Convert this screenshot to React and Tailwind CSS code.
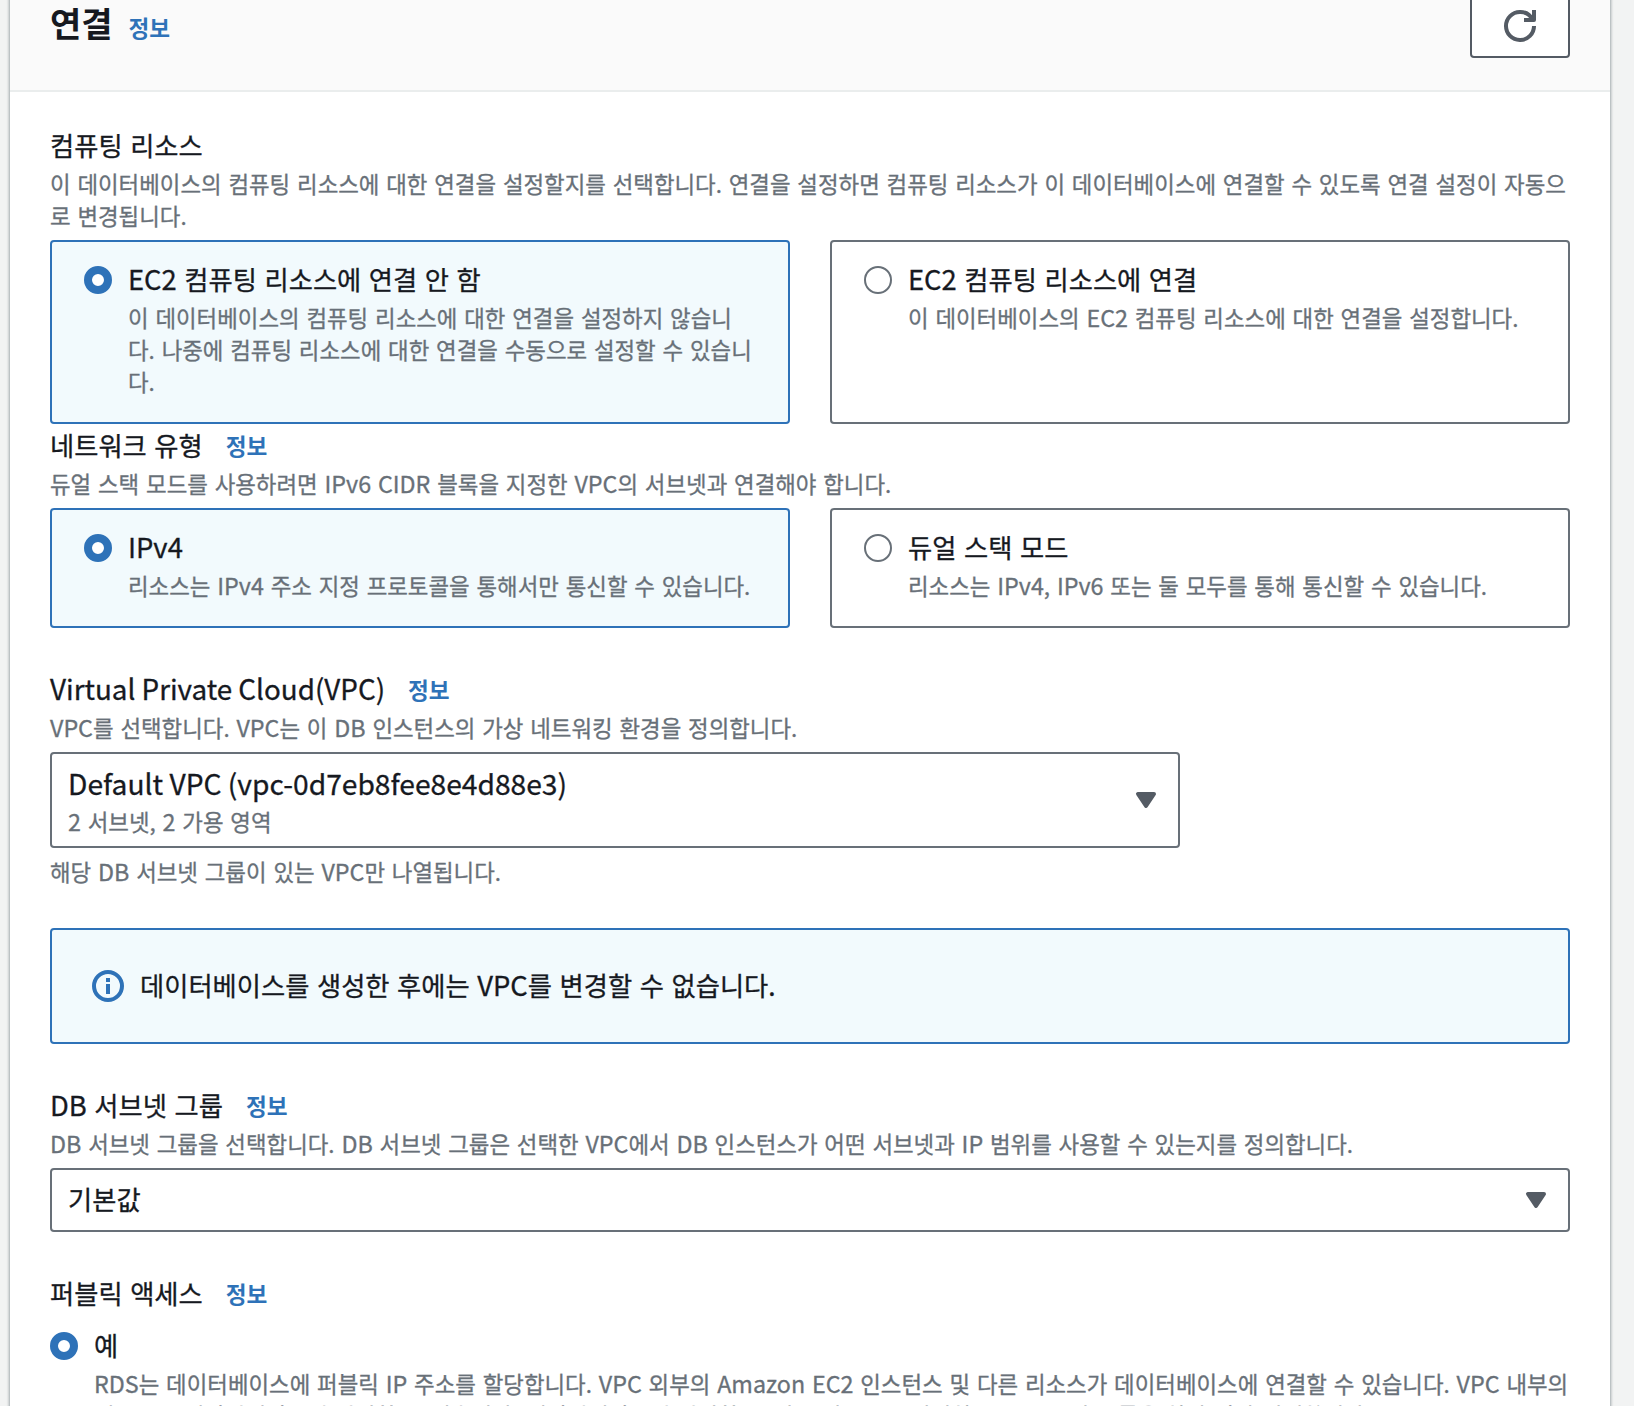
import { Children } from "react";
import clsx from "clsx";

// latin words are set a touch larger than the hangul around them
function mixed(children) {
  return Children.toArray(children).map((child) => {
    if (typeof child !== "string") return child;
    return child.split(/([A-Za-z0-9]+)/).map((part, i) => (
      i % 2 ? <span key={ i } className="text-[1.04em] leading-none">{ part }</span> : part
    ));
  });
}

function InfoLink({ className }) {
  return (
    <a href="#" className={ clsx("text-[22.6px] font-bold text-[#2e72b8]", className) }>정보</a>
  );
}

function Label({ info, className, children }) {
  return (
    <div className="flex h-11 items-center whitespace-nowrap">
      <span className={ clsx("pb-0.5 text-[#16191f] [-webkit-text-stroke:0.3px]", className || "text-[26.3px] [word-spacing:1.7px]") }>
        { className ? children : mixed(children) }
      </span>
      { info && <InfoLink className="ml-[23px]" /> }
    </div>
  );
}

function Hint({ children }) {
  return (
    <p className="-mt-px pb-px text-[22.4px] leading-8 whitespace-nowrap text-[#687078] [word-spacing:1.8px] [-webkit-text-stroke:0.3px]">
      { mixed(children) }
    </p>
  );
}

function Radio({ checked }) {
  return (
    <span
      className={ clsx(
        "mt-2 block size-7 shrink-0 rounded-full bg-white",
        checked ? "border-8 border-[#2e72b8]" : "border-2 border-[#687078]"
      ) }
    />
  );
}

function Tile({ checked, title, titleClass, children }) {
  return (
    <div
      className={ clsx(
        "flex gap-4 rounded-[4px] border-2 px-8 pt-4 pb-6",
        checked ? "border-[#2e72b8] bg-[#f2fafd]" : "border-[#687078] bg-white"
      ) }
    >
      <Radio checked={ checked } />
      <div>
        <Label className={ titleClass }>{ title }</Label>
        { children }
      </div>
    </div>
  );
}

function Caret() {
  return (
    <svg viewBox="0 0 16 16" className="size-8 shrink-0">
      <path d="M4 5h8l-4 6z" fill="#545b64" stroke="#545b64" strokeWidth="2" strokeLinejoin="round" />
    </svg>
  );
}

function RefreshIcon() {
  return (
    <svg viewBox="0 0 16 16" className="size-8" fill="none" stroke="#545b64" strokeWidth="2">
      <path d="M10 5h5V0" strokeLinejoin="round" />
      <path d="M15 8a6.957 6.957 0 0 1-7 7 6.957 6.957 0 0 1-7-7 6.957 6.957 0 0 1 7-7 6.87 6.87 0 0 1 6.3 4" />
    </svg>
  );
}

function InfoIcon() {
  return (
    <svg viewBox="0 0 16 16" className="size-8 shrink-0" fill="none" stroke="#2e72b8" strokeWidth="2">
      <circle cx="8" cy="8" r="7" />
      <path d="M8 12V7M8 6V4" />
    </svg>
  );
}

export default function App() {
  return (
    <div className="h-[1406px] overflow-hidden bg-[#f2f3f3] pr-6 pl-2.5 font-['Noto_Sans_CJK_KR',sans-serif]">
      <section className="-mt-2 h-[1500px] bg-white pt-2 shadow-[0_2px_2px_0_rgba(0,28,36,0.3),2px_2px_2px_0_rgba(0,28,36,0.15),-2px_2px_2px_0_rgba(0,28,36,0.15)]">
        <header className="flex h-[92px] justify-between border-b-2 border-[#eaeded] bg-[#fafafa] px-10">
          <div className="flex items-baseline whitespace-nowrap">
            <h2 className="text-[34px] leading-[46px] font-bold text-[#16191f]">연결</h2>
            <InfoLink className="ml-4" />
          </div>
          <button className="-mt-1.5 flex h-16 w-25 items-center justify-center rounded-[4px] border-2 border-[#545b64] bg-white">
            <RefreshIcon />
          </button>
        </header>

        <div className="px-10 pt-8">
          <Label>컴퓨팅 리소스</Label>
          <Hint>
            이 데이터베이스의 컴퓨팅 리소스에 대한 연결을 설정할지를 선택합니다. 연결을 설정하면 컴퓨팅 리소스가 이 데이터베이스에 연결할 수 있도록 연결 설정이 자동으
            <br />
            로 변경됩니다.
          </Hint>
          <div className="mt-2 grid grid-cols-2 gap-10">
            <Tile checked title="EC2 컴퓨팅 리소스에 연결 안 함">
              <Hint>
                이 데이터베이스의 컴퓨팅 리소스에 대한 연결을 설정하지 않습니
                <br />
                다. 나중에 컴퓨팅 리소스에 대한 연결을 수동으로 설정할 수 있습니
                <br />
                다.
              </Hint>
            </Tile>
            <Tile title="EC2 컴퓨팅 리소스에 연결">
              <Hint>이 데이터베이스의 EC2 컴퓨팅 리소스에 대한 연결을 설정합니다.</Hint>
            </Tile>
          </div>

          <Label info>네트워크 유형</Label>
          <Hint>듀얼 스택 모드를 사용하려면 IPv6 CIDR 블록을 지정한 VPC의 서브넷과 연결해야 합니다.</Hint>
          <div className="mt-2 grid grid-cols-2 gap-10">
            <Tile checked title="IPv4" titleClass="text-[27.4px]">
              <Hint>리소스는 IPv4 주소 지정 프로토콜을 통해서만 통신할 수 있습니다.</Hint>
            </Tile>
            <Tile title="듀얼 스택 모드">
              <Hint>리소스는 IPv4, IPv6 또는 둘 모두를 통해 통신할 수 있습니다.</Hint>
            </Tile>
          </div>

          <div className="mt-10">
            <Label info className="text-[27.8px]">Virtual Private Cloud(VPC)</Label>
            <Hint>VPC를 선택합니다. VPC는 이 DB 인스턴스의 가상 네트워킹 환경을 정의합니다.</Hint>
            <div className="mt-2 flex h-24 w-[1130px] items-center justify-between rounded-[4px] border-2 border-[#687078] px-4">
              <div>
                <Label className="text-[28.2px]">Default VPC (vpc-0d7eb8fee8e4d88e3)</Label>
                <Hint>2 서브넷, 2 가용 영역</Hint>
              </div>
              <Caret />
            </div>
            <div className="pt-2">
              <Hint>해당 DB 서브넷 그룹이 있는 VPC만 나열됩니다.</Hint>
            </div>
          </div>

          <div className="mt-10 flex h-29 items-center gap-4 rounded-[4px] border-2 border-[#2e72b8] bg-[#f2fafd] px-10">
            <InfoIcon />
            <Label>데이터베이스를 생성한 후에는 VPC를 변경할 수 없습니다.</Label>
          </div>

          <div className="mt-10">
            <Label info>DB 서브넷 그룹</Label>
            <Hint>
              DB 서브넷 그룹을 선택합니다. DB 서브넷 그룹은 선택한 VPC에서 DB 인스턴스가 어떤 서브넷과 IP 범위를 사용할 수 있는지를 정의합니다.
            </Hint>
            <div className="mt-2 flex h-16 items-center justify-between rounded-[4px] border-2 border-[#687078] px-4">
              <Label>기본값</Label>
              <Caret />
            </div>
          </div>

          <div className="mt-10">
            <Label info>퍼블릭 액세스</Label>
            <div className="mt-2 flex gap-4">
              <Radio checked />
              <div>
                <Label>예</Label>
                <Hint>
                  RDS는 데이터베이스에 퍼블릭 IP 주소를 할당합니다. VPC 외부의 Amazon EC2 인스턴스 및 다른 리소스가 데이터베이스에 연결할 수 있습니다. VPC 내부의
                  <br />
                  리소스도 데이터베이스에 연결할 수 있습니다. 데이터베이스에 연결할 수 있는 리소스를 지정하는 VPC 보안 그룹을 하나 이상 선택합니다.
                </Hint>
              </div>
            </div>
          </div>
        </div>
      </section>
    </div>
  );
}
